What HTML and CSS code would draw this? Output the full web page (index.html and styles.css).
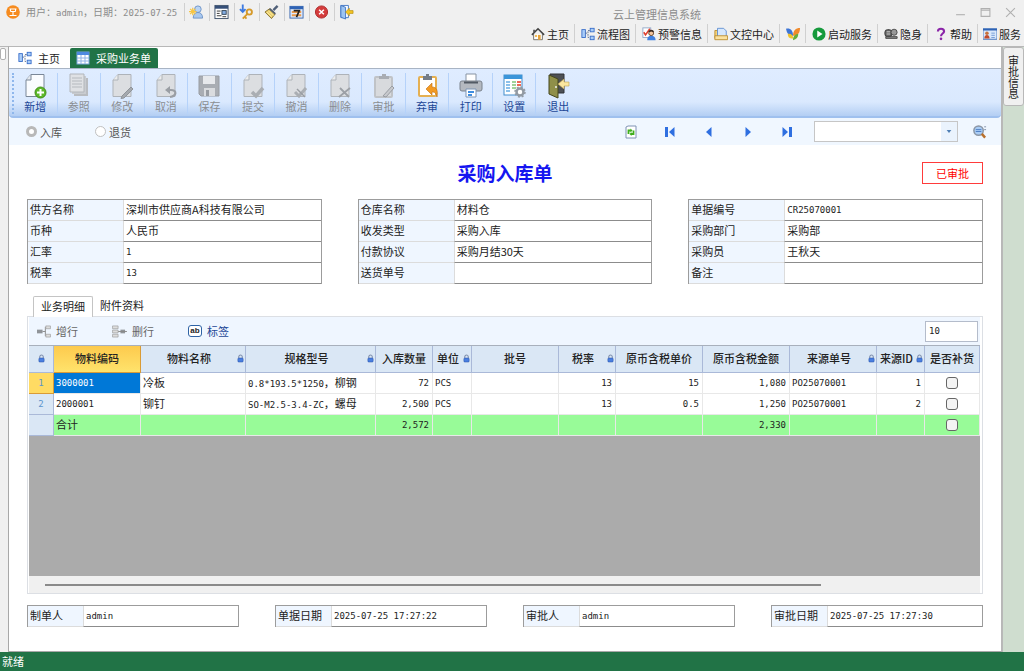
FILE: index.html
```html
<!DOCTYPE html>
<html lang="zh-CN">
<head>
    <meta charset="UTF-8">
    <meta name="viewport" content="width=device-width, initial-scale=1.0">
    <title>云上管理信息系统</title>
    <link rel="stylesheet" href="styles.css">
</head>
<body>
    <!-- shared icon shapes -->
    <svg class="defs" aria-hidden="true">
        <symbol id="i-lock" viewBox="0 0 8 9"><path d="M2 4V2.5a2 2 0 0 1 4 0V4" fill="none" stroke="#7f8fae" stroke-width="1.2"/><rect x="1" y="4" width="6" height="4.5" rx="1" fill="#4a7fe0" stroke="#2a52a8" stroke-width=".6"/></symbol>
        <symbol id="i-doc" viewBox="0 0 24 26"><path d="M8 1.500H21V23.500H3V7z" fill="#dcdee1" stroke="#aeb3b9"/><path d="M8 1.500V7H3" fill="#eceded" stroke="#aeb3b9"/></symbol>
        <symbol id="i-flow" viewBox="0 0 16 16"><g fill="#a9cdf8" stroke="#356bc8"><rect x="1" y="3" width="4" height="9"/><rect x="10.500" y="1.500" width="4.500" height="4"/><rect x="10.500" y="10.500" width="4.500" height="4"/></g><path d="M5 7h3M10 4H8v8h2" fill="none" stroke="#5a6d8c" stroke-dasharray="2 1"/></symbol>
    </svg>

    <header class="titlebar">
        <div class="quick">
            <svg class="logo" viewBox="0 0 14 14"><circle cx="7" cy="7" r="6.800" fill="#f68b1f"/><path d="M3.500 4h7M4.500 6.500h5M7 6.500v4M3.500 10.500h7M4.500 4v2.500M9.500 4v2.500" fill="none" stroke="#fff" stroke-width="1.100"/></svg>
            <span class="user">用户：<span class="mono">admin</span>，日期：<span class="mono">2025-07-25</span></span>
            <button type="button" aria-label="用户"><svg viewBox="0 0 16 16"><circle cx="9.500" cy="5" r="3.500" fill="#b9d4f5" stroke="#6f94c8"/><path d="M4.500 14.500c0-4 2-6 5-6s5 2 5 6z" fill="#a8c8f0" stroke="#6f94c8"/><path d="M4 3.500v8M0 7.500h8M1.200 4.700l5.600 5.600M6.800 4.700l-5.600 5.600" stroke="#f6c544" stroke-width="1.300"/></svg></button>
            <button type="button" aria-label="窗口"><svg viewBox="0 0 16 16"><rect x="1" y="1" width="14" height="14" fill="#fff" stroke="#3f526b"/><path d="M1 3h14" stroke="#354f78" stroke-width="3"/><path d="M3 7h4M3 9.500h3M3 12h5M9 13h4" stroke="#333"/><rect x="8.500" y="6.500" width="4.500" height="4" fill="#84aee4" stroke="#345"/></svg></button>
            <button type="button" aria-label="密钥"><svg viewBox="0 0 16 16"><path d="M4 0v8M1 5l3 3 3-3" fill="none" stroke="#3f7be0" stroke-width="2"/><circle cx="11" cy="8" r="2.800" fill="none" stroke="#d69a2a" stroke-width="2"/><path d="M9 10l-5 5M6 13l2 2" stroke="#d69a2a" stroke-width="2"/></svg></button>
            <button type="button" aria-label="清理"><svg viewBox="0 0 16 16"><path d="M14.500 1.500L10 6" stroke="#4f5f78" stroke-width="2.500"/><path d="M6 4.500l6 5.500-4 5L1 8z" fill="#e8cb66" stroke="#857233"/><path d="M6 4.500l6 5.500" stroke="#556070" stroke-width="2"/><path d="M3 8l5 5M5 7l5 5" stroke="#fff1ae"/></svg></button>
            <button type="button" aria-label="日历"><svg viewBox="0 0 16 16"><rect x="1" y="2" width="14" height="12.500" fill="#dfeafc" stroke="#3c6ab0"/><path d="M1 3.500h14" stroke="#2f63b5" stroke-width="3"/><path d="M3 8h10M3 11.500h10" stroke="#e89a4c" stroke-width="2"/><path d="M5 6.500h6l-3 7" fill="none" stroke="#222" stroke-width="1.800"/></svg></button>
            <button type="button" aria-label="关闭"><svg viewBox="0 0 16 16"><circle cx="8" cy="8" r="6.500" fill="#d43c3c" stroke="#ad2a2a"/><path d="M5.500 5.500l5 5M10.500 5.500l-5 5" stroke="#fff" stroke-width="1.600"/></svg></button>
            <button type="button" aria-label="退出系统"><svg viewBox="0 0 16 16"><path d="M2 1h8v13H2z" fill="#fff" stroke="#4377c4"/><path d="M2 1l5 2v12.500l-5-2z" fill="#9cc4f2" stroke="#4377c4"/><path d="M15 6.500h-4V4L7 8l4 4V9.500h4z" fill="#f4c623" stroke="#b58d10" stroke-width=".7"/></svg></button>
        </div>
        <h1>云上管理信息系统</h1>
        <div class="window-buttons">
            <button type="button" aria-label="最小化"><svg viewBox="0 0 10 10"><path d="M1 7h8"/></svg></button>
            <button type="button" aria-label="最大化"><svg viewBox="0 0 10 10"><path d="M1 1.500h8v7H1zM1 3h8"/></svg></button>
            <button type="button" aria-label="关闭窗口"><svg viewBox="0 0 10 10"><path d="M1 1l8 8M9 1L1 9"/></svg></button>
        </div>
    </header>

    <nav class="menu">
        <a href="#"><svg viewBox="0 0 16 16"><path d="M3 8v6.500h10V8" fill="#fff" stroke="#6b665c"/><path d="M1 9l7-7 7 7" fill="none" stroke="#444" stroke-width="1.800"/><rect x="8" y="9" width="3" height="5.500" fill="#e7a33a"/><path d="M3.500 3v3" stroke="#555" stroke-width="2"/><rect x="4.500" y="9" width="2.500" height="2.500" fill="#f3bd5b"/></svg>主页</a>
        <a href="#"><svg viewBox="0 0 16 16"><use href="#i-flow"/></svg>流程图</a>
        <a href="#"><svg viewBox="0 0 16 16"><rect x="1" y="1" width="9" height="11" fill="#fff" stroke="#8fa5c7"/><path d="M2 6l2 3 5-7" fill="none" stroke="#df3f2e" stroke-width="1.800"/><path d="M6 15c0-4 2-5 4.500-5s5 1 5 5z" fill="#3f80e0"/><circle cx="10.500" cy="7" r="2.800" fill="#f4c69d" stroke="#5b3b25"/><path d="M8 5.500c1-2 4-2 5 0" stroke="#3b2a20" stroke-width="2" fill="none"/></svg>预警信息</a>
        <a href="#"><svg viewBox="0 0 16 16"><path d="M1 4h3v9H1z" fill="#f6d277" stroke="#b98b2d"/><path d="M4 1.500h7l3 3V11H4z" fill="#d5e7fd" stroke="#5d8dd0"/><path d="M1 10h14.500v4.500H1z" fill="#fbe2a0" stroke="#b98b2d"/></svg>文控中心</a>
        <a href="#" aria-label="插件"><svg viewBox="0 0 16 16"><path d="M0 2c5-1 8 2 8 8-5 0-7-3-8-8z" fill="#3f76d6"/><path d="M16 1c-5 0-8 3-8 9 6 0 8-4 8-9z" fill="#f08a2c"/><path d="M2 8c3-1 6 1 6.500 5C5 14 2 12 2 8z" fill="#f0c32c"/><path d="M14 8c-4 0-6 3-6 7 4-1 6-3 6-7z" fill="#68ad3a"/></svg></a>
        <a href="#"><svg viewBox="0 0 16 16"><circle cx="8" cy="8" r="7.500" fill="#169a3c"/><path d="M6 4l6 4-6 4z" fill="#fff"/></svg>启动服务</a>
        <a href="#"><svg viewBox="0 0 16 16"><rect x="1" y="3" width="8" height="8" rx="3" fill="#666" stroke="#333"/><circle cx="11.500" cy="6" r="3.500" fill="#999" stroke="#444"/><path d="M2 13h13v-2H2z" fill="#888" stroke="#444"/><path d="M3 5.500h4M3 8h4" stroke="#ddd"/></svg>隐身</a>
        <a href="#"><svg viewBox="0 0 16 16"><path d="M4.500 5c0-4 7-4 7 0 0 2.500-3.500 2.500-3.500 5.500" fill="none" stroke="#8b25a8" stroke-width="2.400"/><circle cx="8" cy="13.500" r="1.500" fill="#8b25a8"/></svg>帮助</a>
        <a href="#"><svg viewBox="0 0 16 16"><rect x="0" y="2" width="16" height="12" fill="#d9e8fb" stroke="#3e6fb8"/><path d="M0 3h16" stroke="#2f63b5" stroke-width="2"/><circle cx="4.500" cy="7" r="2" fill="#c8703a"/><path d="M1.500 13c0-5 6-5 6 0z" fill="#c24a2a"/><path d="M9.500 7h4M9.500 9.500h4M9.500 12h4" stroke="#6d97d4"/></svg>服务</a>
    </nav>

    <div class="workspace">
        <aside class="left-rail"><span></span></aside>

        <main class="main">
            <div class="doc-tabs">
                <a href="#"><svg viewBox="0 0 16 16"><use href="#i-flow"/></svg>主页</a>
                <a href="#" class="active"><svg viewBox="0 0 14 14"><rect x="1" y="1" width="12" height="12" fill="#fff" stroke="#7ba6de"/><path d="M1 2.500h12" stroke="#4e8ae0" stroke-width="3"/><path d="M1 7h12M1 10h12M5 4v9M9 4v9" stroke="#8fb3e6"/></svg>采购业务单</a>
            </div>

            <div class="toolbar">
                <div class="tools">
                    <button type="button"><svg viewBox="0 0 24 26"><path d="M8 1.500H21V23.500H3V7z" fill="#fafcff" stroke="#7a8798"/><path d="M8 1.500V7H3" fill="#e4e9f0" stroke="#7a8798"/><circle cx="17.500" cy="19.500" r="5.500" fill="#5db82a" stroke="#3f8f16"/><path d="M17.500 16v7M14 19.500h7" stroke="#fff" stroke-width="2"/></svg>新增</button>
                    <button type="button" disabled><svg viewBox="0 0 24 26"><path d="M7 5h14v18H7z" fill="#b9bcc0"/><path d="M5 3h14v18H5z" fill="#c9ccd0"/><path d="M3 1h14v18H3z" fill="#dfe1e4" stroke="#b2b6bb"/><path d="M5 5h10M5 8h10M5 11h10M5 14h10" stroke="#b5b9be"/></svg>参照</button>
                    <button type="button" disabled><svg viewBox="0 0 24 26"><use href="#i-doc"/><path d="M12 23l9-9 2 2-9 9-3 .500z" fill="#a5a9ae" stroke="#8f949a"/></svg>修改</button>
                    <button type="button" disabled><svg viewBox="0 0 24 26"><use href="#i-doc"/><path d="M16 24c7-1 7-7 1-7h-3" fill="none" stroke="#9a9ea4" stroke-width="2.200"/><path d="M16 13v8l-5-4z" fill="#9a9ea4"/></svg>取消</button>
                    <button type="button" disabled><svg viewBox="0 0 24 26"><path d="M2 3h20v20H4l-2-2z" fill="#a9adb3" stroke="#999da3"/><rect x="6" y="3" width="12" height="8" fill="#e7e9ec"/><rect x="7" y="15" width="11" height="8" fill="#dadcdf"/><rect x="9" y="17" width="3" height="6" fill="#989ca2"/></svg>保存</button>
                    <button type="button" disabled><svg viewBox="0 0 24 26"><use href="#i-doc"/><path d="M11 19l4 4 7-8" fill="none" stroke="#aaaeb3" stroke-width="3.500"/></svg>提交</button>
                    <button type="button" disabled><svg viewBox="0 0 24 26"><use href="#i-doc"/><path d="M11 19l4 4 7-8" fill="none" stroke="#aaaeb3" stroke-width="3"/><path d="M13 16l8 8" stroke="#999da3" stroke-width="1.500"/></svg>撤消</button>
                    <button type="button" disabled><svg viewBox="0 0 24 26"><use href="#i-doc"/><path d="M12 15l9 9M22 15L11 24" stroke="#9ca0a6" stroke-width="1.800"/></svg>删除</button>
                    <button type="button" disabled><svg viewBox="0 0 24 26"><rect x="3" y="4" width="17" height="20" rx="1" fill="#d8dadd" stroke="#c0c3c7" stroke-width="2"/><path d="M7 6V3h3V1h4v2h3v3z" fill="#a9adb3"/><path d="M11 23l9-10 2 2-8 9z" fill="#c7c9cd" stroke="#999da3"/></svg>审批</button>
                    <button type="button"><svg viewBox="0 0 24 26"><rect x="4" y="4" width="17" height="19" rx="1" fill="#fff" stroke="#e5b052" stroke-width="2"/><path d="M8 7V3h3V1h3v2h3v4z" fill="#737c88"/><path d="M11 16l6-6v4c5 0 6 4 5 10-1-4-2-5-5-5v3z" fill="#f39a22" stroke="#bd6d10" stroke-width=".6"/></svg>弃审</button>
                    <button type="button"><svg viewBox="0 0 24 26"><path d="M7 1h10v9H7z" fill="#fff" stroke="#8793a2"/><rect x="1" y="8" width="22" height="10" rx="2" fill="#b4b9c0" stroke="#7a828c"/><path d="M5 9.500h14" stroke="#525a64" stroke-width="2"/><path d="M7 16h10v8H7z" fill="#fff" stroke="#7d95b5"/><path d="M9 19h6M9 22h4" stroke="#408ee0" stroke-width="2"/></svg>打印</button>
                    <button type="button"><svg viewBox="0 0 24 26"><rect x="2" y="2" width="18" height="20" fill="#fff" stroke="#438dcc"/><path d="M2 4h18" stroke="#3b95d9" stroke-width="4"/><path d="M4 9h4M4 12h4M4 15h4M4 18h4" stroke="#8cc0ea" stroke-width="2"/><path d="M10 9h4M10 12h4M10 15h4" stroke="#9fd39a" stroke-width="2"/><path d="M15 9h4M15 12h4" stroke="#ec6a57" stroke-width="2"/><circle cx="18" cy="19" r="3.500" fill="#fff" stroke="#929aa3" stroke-width="2.500"/><circle cx="18" cy="19" r="5" fill="none" stroke="#929aa3" stroke-width="1.500" stroke-dasharray="2 1.900"/></svg>设置</button>
                    <button type="button"><svg viewBox="0 0 24 26"><path d="M4 1h14v19H8z" fill="#4d5054" stroke="#303236"/><path d="M3 2l9 4v19l-9-4z" fill="#8f8f49" stroke="#45461c"/><circle cx="10" cy="14" r="1" fill="#eee"/><path d="M23 9h-5V6l-6 5 6 5v-3h5z" fill="#fbe7a0" stroke="#bda352" stroke-width=".6"/></svg>退出</button>
                </div>
            </div>

            <div class="filter">
                <label><input type="radio" name="kind" checked disabled>入库</label>
                <label><input type="radio" name="kind" disabled>退货</label>
                <div class="pager">
                    <button type="button" aria-label="刷新"><svg viewBox="0 0 14 14"><path d="M2 2l2-1h8v12H2z" fill="#fff" stroke="#7f92b4"/><path d="M4.500 9V5.500H7M9.500 5.500V9H7" fill="none" stroke="#3fae1d" stroke-width="1.800"/><path d="M6.500 3.500v4l2-2zM7.500 7v4l-2-2z" fill="#3fae1d"/></svg></button>
                    <button type="button" aria-label="首条"><svg viewBox="0 0 14 14"><path d="M2 2h3v10H2zM11.500 2v10L6 7z" fill="#2f6fe0"/></svg></button>
                    <button type="button" aria-label="上一条"><svg viewBox="0 0 14 14"><path d="M9.500 2v10L4 7z" fill="#2f6fe0"/></svg></button>
                    <button type="button" aria-label="下一条"><svg viewBox="0 0 14 14"><path d="M4.500 2v10L10 7z" fill="#2f6fe0"/></svg></button>
                    <button type="button" aria-label="末条"><svg viewBox="0 0 14 14"><path d="M9 2h3v10H9zM2.500 2v10L8 7z" fill="#2f6fe0"/></svg></button>
                </div>
                <div class="combo">
                    <select aria-label="单号"><option></option></select>
                    <svg viewBox="0 0 16 20"><path d="M5.500 8.500h5L8 11.500z" fill="#4f7fb5"/></svg>
                </div>
                <button type="button" class="search" aria-label="查找"><svg viewBox="0 0 16 16"><circle cx="7" cy="7" r="5" fill="#a9ccf5" stroke="#8b96a5" stroke-width="1.600"/><path d="M4 6h6M4 8h6" stroke="#4c7dc2"/><path d="M10.500 10.500l3.500 4" stroke="#b9702c" stroke-width="2.600"/><path d="M13 3h2M13 6h2" stroke="#7d8da5"/></svg></button>
            </div>

            <div class="sheet">
                <div class="sheet-title">
                    <h2>采购入库单</h2>
                    <span class="stamp">已审批</span>
                </div>

                <div class="fields">
                    <div class="group">
                        <label for="supplier">供方名称</label><input id="supplier" value="深圳市供应商A科技有限公司">
                        <label for="currency">币种</label><input id="currency" value="人民币">
                        <label for="rate">汇率</label><input id="rate" class="mono" value="1">
                        <label for="tax">税率</label><input id="tax" class="mono" value="13">
                    </div>
                    <div class="group">
                        <label for="store">仓库名称</label><input id="store" value="材料仓">
                        <label for="type">收发类型</label><input id="type" value="采购入库">
                        <label for="pay">付款协议</label><input id="pay" value="采购月结30天">
                        <label for="delivery">送货单号</label><input id="delivery">
                    </div>
                    <div class="group">
                        <label for="code">单据编号</label><input id="code" class="mono" value="CR25070001">
                        <label for="dept">采购部门</label><input id="dept" value="采购部">
                        <label for="buyer">采购员</label><input id="buyer" value="王秋天">
                        <label for="memo">备注</label><input id="memo">
                    </div>
                </div>

                <div class="detail-tabs">
                    <a href="#" class="active">业务明细</a>
                    <a href="#">附件资料</a>
                </div>

                <section class="detail">
                    <div class="detail-bar">
                        <button type="button" class="muted"><svg viewBox="0 0 16 14"><path d="M1 5h6v4H1z" fill="#909499"/><path d="M7 7h3M10 2v10" stroke="#888" fill="none"/><path d="M10.500 1h5v3h-5zM10.500 10h5v3h-5z" fill="#ddd" stroke="#9a9a9a" stroke-width=".7"/></svg>增行</button>
                        <button type="button" class="muted"><svg viewBox="0 0 16 14"><path d="M9 5h5v4H9z" fill="#909499"/><path d="M6 7h10" stroke="#888"/><path d="M.500 1h6v3h-6zM.500 5.500h6v3h-6zM.500 10h6v3h-6z" fill="#ddd" stroke="#9a9a9a" stroke-width=".7"/></svg>删行</button>
                        <button type="button"><span class="ab">ab</span>标签</button>
                        <input class="mono" aria-label="行数" value="10">
                    </div>

                    <table class="grid">
                        <colgroup>
                            <col class="w25"><col class="w87"><col class="w105"><col class="w130"><col class="w57"><col class="w39"><col class="w87"><col class="w57"><col class="w87"><col class="w87"><col class="w87"><col class="w48"><col class="w55">
                        </colgroup>
                        <thead>
                            <tr>
                                <th><svg class="lock"><use href="#i-lock"/></svg></th>
                                <th class="current">物料编码</th>
                                <th><div><span>物料名称</span><svg class="lock"><use href="#i-lock"/></svg></div></th>
                                <th><div><span>规格型号</span><svg class="lock"><use href="#i-lock"/></svg></div></th>
                                <th>入库数量</th>
                                <th><div><span>单位</span><svg class="lock"><use href="#i-lock"/></svg></div></th>
                                <th>批号</th>
                                <th><div><span>税率</span><svg class="lock"><use href="#i-lock"/></svg></div></th>
                                <th>原币含税单价</th>
                                <th>原币含税金额</th>
                                <th><div><span>来源单号</span><svg class="lock"><use href="#i-lock"/></svg></div></th>
                                <th><div><span>来源ID</span><svg class="lock"><use href="#i-lock"/></svg></div></th>
                                <th>是否补货</th>
                            </tr>
                        </thead>
                        <tbody>
                            <tr>
                                <th class="current">1</th>
                                <td class="selected">3000001</td>
                                <td><span class="cjk">冷板</span></td>
                                <td>0.8*193.5*1250<span class="cjk">，柳钢</span></td>
                                <td class="num">72</td>
                                <td>PCS</td>
                                <td></td>
                                <td class="num">13</td>
                                <td class="num">15</td>
                                <td class="num">1,080</td>
                                <td>PO25070001</td>
                                <td class="num">1</td>
                                <td class="check"><input type="checkbox" aria-label="是否补货 1"></td>
                            </tr>
                            <tr>
                                <th>2</th>
                                <td>2000001</td>
                                <td><span class="cjk">铆钉</span></td>
                                <td>SO-M2.5-3.4-ZC<span class="cjk">，螺母</span></td>
                                <td class="num">2,500</td>
                                <td>PCS</td>
                                <td></td>
                                <td class="num">13</td>
                                <td class="num">0.5</td>
                                <td class="num">1,250</td>
                                <td>PO25070001</td>
                                <td class="num">2</td>
                                <td class="check"><input type="checkbox" aria-label="是否补货 2"></td>
                            </tr>
                        </tbody>
                        <tfoot>
                            <tr>
                                <th></th>
                                <td><span class="cjk">合计</span></td>
                                <td></td>
                                <td></td>
                                <td class="num">2,572</td>
                                <td></td>
                                <td></td>
                                <td></td>
                                <td></td>
                                <td class="num">2,330</td>
                                <td></td>
                                <td></td>
                                <td class="check"><input type="checkbox" aria-label="是否补货 合计"></td>
                            </tr>
                        </tfoot>
                    </table>
                    <div class="grid-space"></div>
                    <div class="scrollbar"><span></span></div>
                </section>

                <div class="signs">
                    <div class="group"><label for="maker">制单人</label><input id="maker" class="mono" value="admin"></div>
                    <div class="group"><label for="made">单据日期</label><input id="made" class="mono" value="2025-07-25 17:27:22"></div>
                    <div class="group"><label for="checker">审批人</label><input id="checker" class="mono" value="admin"></div>
                    <div class="group"><label for="checked">审批日期</label><input id="checked" class="mono" value="2025-07-25 17:27:30"></div>
                </div>
            </div>
        </main>

        <aside class="right-rail">
            <button type="button">审批信息</button>
        </aside>
    </div>

    <footer class="status">就绪</footer>
</body>
</html>
```
FILE: styles.css
```css
* {
    margin: 0;
    padding: 0;
    box-sizing: border-box;
}

body {
    display: flex;
    flex-direction: column;
    min-height: 100vh;
    background-color: #f0f0f0;
    color: #222;
    font: 11px/16px "Noto Sans CJK SC", sans-serif;
}

button, input, select {
    border: 0;
    background: none;
    color: inherit;
    font: inherit;
}

a {
    color: inherit;
    text-decoration: none;
}

svg {
    display: block;
    flex: none;
}

.defs {
    position: absolute;
    width: 0;
    height: 0;
}

.mono {
    font-family: "DejaVu Sans Mono", "Noto Sans CJK SC", monospace;
    font-size: 9px;
}

/* title bar */
.titlebar {
    display: flex;
    align-items: center;
    height: 24px;
    padding: 0 8px 0 6px;
    color: #8c8c8c;
}

.quick {
    display: flex;
    align-items: center;
}

.logo {
    width: 14px;
    height: 14px;
    margin-right: 6px;
}

.user {
    width: 158px;
    font-size: 10px;
    white-space: nowrap;
}

.quick button {
    padding: 1px 5px 1px 4px;
    border-left: 1px solid #d0d0d0;
}

.quick button svg {
    width: 15px;
    height: 16px;
}

.titlebar h1 {
    flex: 1;
    padding-top: 3px;
    font-size: 11px;
    font-weight: 400;
    text-align: center;
    white-space: nowrap;
}

.window-buttons {
    display: flex;
    gap: 14px;
}

.window-buttons svg {
    width: 11px;
    height: 11px;
    fill: none;
    stroke: #b0b0b0;
}

.menu {
    display: flex;
    justify-content: flex-end;
    height: 22px;
    padding-right: 3px;
}

.menu a {
    display: flex;
    align-items: center;
    gap: 2px;
    height: 19px;
    padding: 0 5px 0 6px;
    border-left: 1px solid #d0d0d0;
}

.menu a:first-child {
    border-left: 0;
}

.menu a:last-child {
    padding: 0 0 0 5px;
}

.menu svg {
    width: 14px;
    height: 14px;
}

/* work area */
.workspace {
    display: flex;
    flex: 1;
}

.left-rail {
    width: 8px;
    border-top: 1px solid #b8b8b8;
}

.left-rail span {
    display: block;
    width: 6px;
    height: 12px;
    margin-top: 1px;
    border: 1px solid #b0b0b0;
    border-radius: 2px;
    background-color: #fff;
}

.main {
    display: flex;
    flex: 1;
    flex-direction: column;
    min-width: 0;
    border: 1px solid #a8a8a8;
    border-top-color: #b8b8b8;
    border-right: 2px solid #b8b8b8;
    background-color: #fff;
}

.right-rail {
    width: 21px;
    border-top: 1px solid #b8b8b8;
    background-color: #cfddcf;
}

.right-rail button {
    width: 21px;
    height: 59px;
    border: 1px solid #b8b8b8;
    border-radius: 3px;
    background-color: #f0f0f0;
    line-height: 10px;
    writing-mode: vertical-rl;
}

.doc-tabs {
    display: flex;
    align-items: flex-end;
    height: 22px;
    border-bottom: 1px solid #a8b4c4;
}

.doc-tabs a {
    display: flex;
    align-items: center;
    gap: 6px;
    height: 20px;
    padding: 0 10px 0 9px;
}

.doc-tabs svg {
    width: 14px;
    height: 14px;
}

.doc-tabs .active {
    padding: 0 7px 0 6px;
    border-radius: 2px 2px 0 0;
    background-color: #217346;
    color: #fff;
}

/* main toolbar */
.toolbar {
    height: 49px;
    padding: 4px 3px;
    border-bottom: 2px solid #9fc0ee;
    border-radius: 0 0 4px 4px;
    background: linear-gradient(#dfecff 0, #dae9fe 70%, #b3cef3 100%);
}

.tools {
    display: grid;
    grid-template-columns: repeat(13, 1fr);
    width: 568px;
    border-left: 2px dotted #8fb7ec;
}

.tools button {
    display: flex;
    flex-direction: column;
    align-items: center;
    height: 41px;
    border-right: 1px solid #b5d2fa;
    color: #1d4796;
    line-height: 14px;
}

.tools button:last-child {
    border-right: 0;
}

.tools button:disabled {
    color: #8a8d91;
}

.tools svg {
    width: 24px;
    height: 26px;
}

.filter {
    display: flex;
    align-items: center;
    height: 27px;
    padding: 0 14px 0 17px;
    background-color: #f0f7ff;
    color: #555;
}

.filter label {
    display: flex;
    align-items: center;
    gap: 3px;
    width: 69px;
}

.filter input {
    width: 11px;
    height: 11px;
    appearance: none;
    border: 1px solid #c0c0c0;
    border-radius: 50%;
    background-color: #fff;
}

.filter input:checked {
    border: 3px solid #b8b8b8;
}

.pager {
    display: flex;
    gap: 25px;
    margin-left: auto;
}

.pager svg {
    width: 14px;
    height: 14px;
}

.combo {
    display: flex;
    position: relative;
    margin: 0 14px 0 20px;
}

.combo select {
    width: 144px;
    height: 21px;
    appearance: none;
    border: 1px solid #c6c6c6;
    background-color: #fff;
}

.combo svg {
    position: absolute;
    top: 1px;
    right: 1px;
    width: 16px;
    height: 19px;
    background-color: #eaf3fd;
    pointer-events: none;
}

.search svg {
    width: 15px;
    height: 15px;
}

/* document */
.sheet {
    display: flex;
    flex: 1;
    flex-direction: column;
    padding: 0 18px 24px;
}

.sheet-title {
    display: grid;
    grid-template-columns: 1fr auto 1fr;
    align-items: center;
    height: 54px;
    padding-top: 2px;
}

.sheet-title h2 {
    grid-column: 2;
    color: #1515f0;
    font-size: 19px;
    line-height: 28px;
}

.stamp {
    justify-self: end;
    padding: 2px 13px;
    border: 1px solid #ff3b3b;
    color: #f00;
}

.fields {
    display: grid;
    grid-template-columns: repeat(3, 1fr);
    gap: 36px;
}

.group {
    display: grid;
    grid-template-columns: 95px 1fr;
    border: 1px solid #9c9c9c;
    border-bottom: 0;
}

.group label {
    height: 21px;
    padding: 1px 2px;
    border-bottom: 1px solid #dcdcdc;
    background-color: #eff6ff;
    white-space: nowrap;
}

.group input {
    min-width: 0;
    height: 21px;
    padding: 0 2px;
    border-bottom: 1px solid #8c8c8c;
    border-left: 1px solid #dcdcdc;
}

.group input:not(.mono) {
    padding-bottom: 2px;
}

.detail-tabs {
    display: flex;
    height: 32px;
    padding: 12px 0 0 6px;
}

.detail-tabs a {
    padding: 1px 7px;
}

.detail-tabs .active {
    height: 21px;
    border: 1px solid #c4c4c4;
    border-bottom: 0;
    border-radius: 2px 2px 0 0;
    background-color: #fff;
    z-index: 1;
}

.detail {
    display: flex;
    flex: 1;
    flex-direction: column;
    padding: 0 2px 0 1px;
    border: 1px solid #dcdfe4;
}

.detail-bar {
    display: flex;
    align-items: center;
    gap: 34px;
    height: 28px;
    padding: 0 2px 0 7px;
    background-color: #eff6ff;
    color: #1d4796;
}

.detail-bar button {
    display: flex;
    align-items: center;
    gap: 5px;
}

.detail-bar .muted {
    color: #666;
}

.detail-bar svg {
    width: 15px;
    height: 13px;
}

.ab {
    width: 14px;
    height: 12px;
    border: 1px solid #2f63a5;
    border-radius: 3px;
    background-color: #fff;
    color: #222;
    font: bold 8px/9px "Liberation Sans", sans-serif;
}

.detail-bar input {
    width: 53px;
    height: 21px;
    margin-left: auto;
    padding: 0 3px;
    border: 1px solid #b4bccb;
    background-color: #fff;
    color: #222;
}

.grid {
    width: 100%;
    table-layout: fixed;
    border-collapse: separate;
    border-spacing: 0;
    border-top: 1px solid #a8b0bc;
}

.grid th {
    border-right: 1px solid #aab9d8;
    border-bottom: 1px solid #aab9d8;
    background-color: #dae7f5;
    font-weight: 500;
    white-space: nowrap;
}

.grid thead th {
    height: 27px;
    padding-bottom: 2px;
}

.grid th div {
    display: flex;
    align-items: center;
    padding-right: 1px;
}

.grid th span {
    flex: 1;
}

.lock {
    width: 7px;
    height: 9px;
}

th > .lock {
    margin: 0 auto;
}

.grid thead .current {
    border-color: #d99b36;
    background: linear-gradient(#fdca4d, #ffe36c);
}

.grid tbody .current {
    border-color: #d99b36;
    background-color: #ffdb63;
}

.grid tbody th {
    color: #5c94cc;
    font: 9px "DejaVu Sans Mono", monospace;
}

.grid td {
    height: 21px;
    padding: 0 2px;
    border-right: 1px solid #e8e8e8;
    border-bottom: 1px solid #e8e8e8;
    font: 9px/16px "DejaVu Sans Mono", monospace;
    white-space: nowrap;
}

.grid .cjk {
    font: 11px/16px "Noto Sans CJK SC", sans-serif;
}

.grid .num {
    padding-right: 3px;
    text-align: right;
}

.grid .selected {
    background-color: #0078d7;
    color: #fff;
}

.grid .check {
    text-align: center;
}

.check input {
    display: block;
    width: 12px;
    height: 12px;
    margin: 0 auto;
    appearance: none;
    border: 1px solid #666;
    border-radius: 3px;
    background-color: #f4f4f4;
}

.grid tfoot td {
    background-color: #98fb98;
}

.w25 { width: 25px; }
.w39 { width: 39px; }
.w48 { width: 48px; }
.w55 { width: 55px; }
.w57 { width: 57px; }
.w87 { width: 87px; }
.w105 { width: 105px; }
.w130 { width: 130px; }

.grid-space {
    flex: 1;
    background-color: #ababab;
}

.scrollbar {
    height: 17px;
    padding: 8px 22px 0 16px;
    background-color: #f0f0f0;
}

.scrollbar span {
    display: block;
    width: 85%;
    height: 2px;
    background-color: #8a8a8a;
}

.signs {
    display: grid;
    grid-template-columns: repeat(4, 1fr);
    gap: 36px;
    margin-top: 11px;
}

.signs .group {
    grid-template-columns: 55px 1fr;
}

.status {
    height: 19px;
    padding: 1px 2px;
    background-color: #217346;
    color: #fff;
}
```
